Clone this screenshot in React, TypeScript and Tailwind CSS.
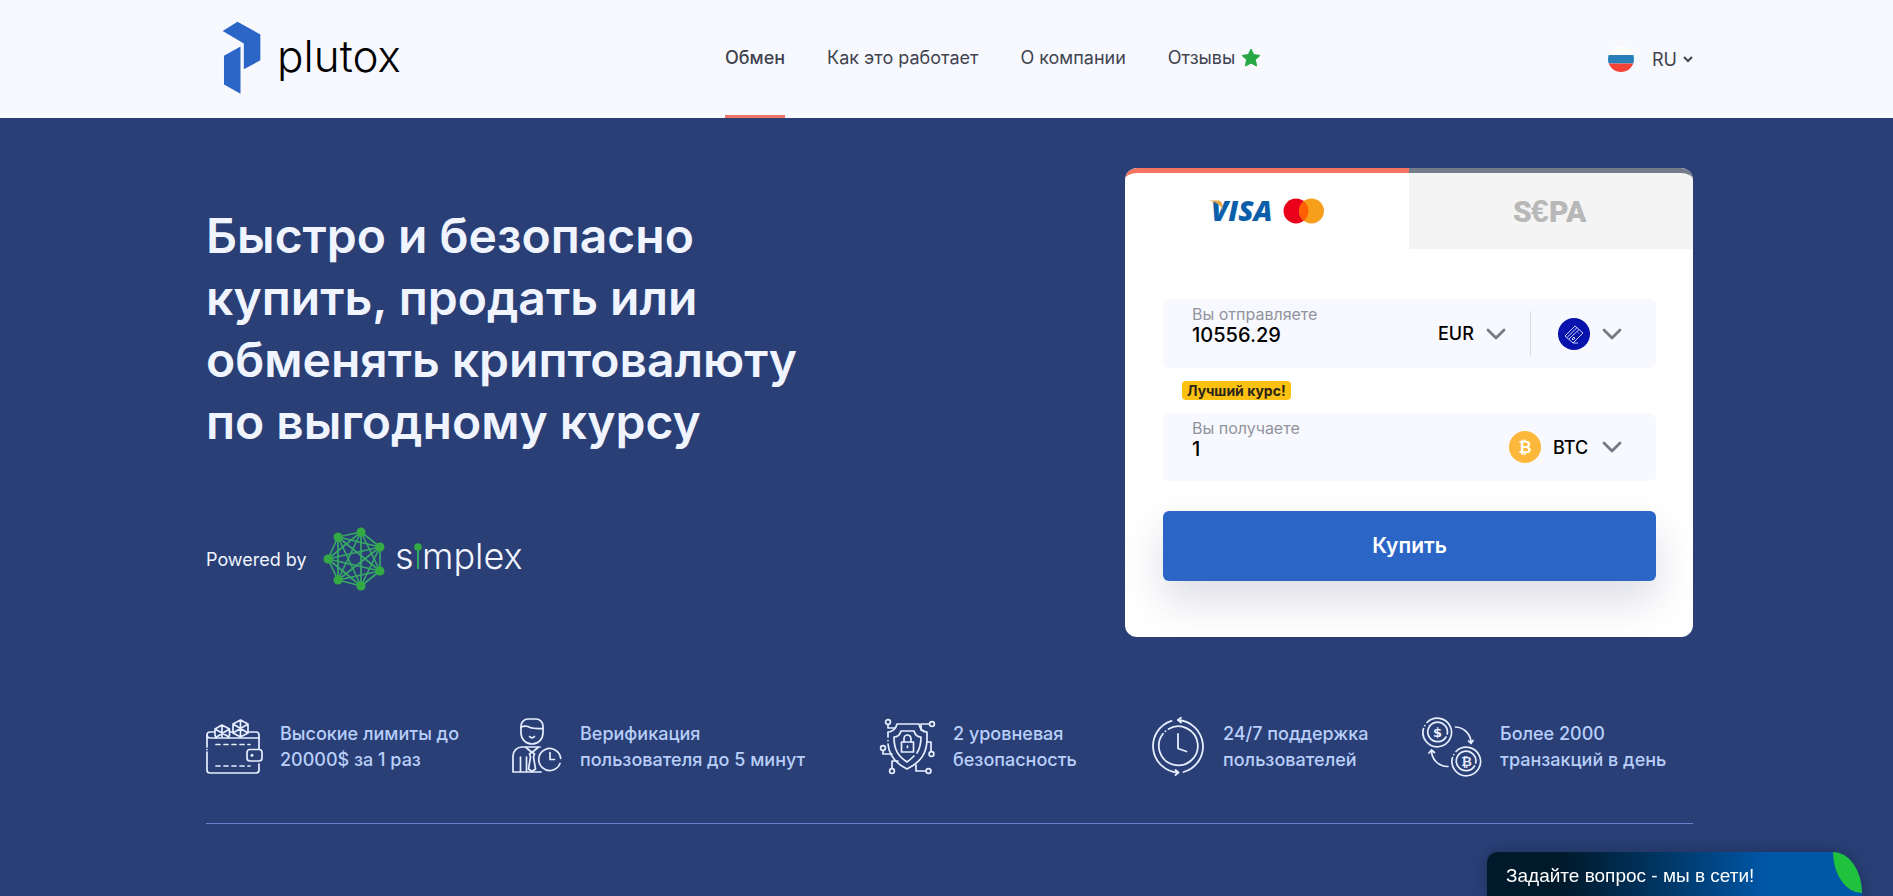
import { useState } from 'react'
import type { ReactNode } from 'react'

interface NavItem {
  label: string
  href: string
  star?: boolean
}

interface Feature {
  icon: ReactNode
  lines: [string, string]
}

const navItems: NavItem[] = [
  { label: 'Обмен', href: '#exchange' },
  { label: 'Как это работает', href: '#how' },
  { label: 'О компании', href: '#about' },
  { label: 'Отзывы', href: '#reviews', star: true },
]

function LogoMark() {
  return (
    <svg viewBox="0 0 118 222" className="h-[74px] w-[39px]" fill="#2b65c6" aria-hidden="true">
      <path d="M2 29 47 1 116 40V118L66 145V67Z" />
      <path d="M6 104 56 76V219L6 191Z" />
    </svg>
  )
}

function Star() {
  return (
    <svg viewBox="0 0 20 19" className="h-[19px] w-5" aria-hidden="true">
      <path
        d="M10 1l2.700 5.600 6.300.8-4.600 4.300 1.200 6.300L10 15.100l-5.600 2.900 1.200-6.300L1 7.400l6.300-.8z"
        fill="#28a745"
        stroke="#28a745"
        strokeWidth="1"
        strokeLinejoin="round"
      />
    </svg>
  )
}

function Flag() {
  return (
    <svg viewBox="0 0 26 26" className="size-[26px] rounded-full" aria-hidden="true">
      <path d="M0 0h26v9H0z" fill="#fff" />
      <path d="M0 9h26v8.500H0z" fill="#2980b9" />
      <path d="M0 17.500h26V26H0z" fill="#f44336" />
    </svg>
  )
}

function Chevron() {
  return (
    <svg viewBox="0 0 20 12" className="h-3 w-5" fill="none" stroke="#777a84" strokeWidth="2.800" strokeLinecap="round" strokeLinejoin="round" aria-hidden="true">
      <path d="M2 2l8 8 8-8" />
    </svg>
  )
}

function VisaLogo() {
  return (
    <svg viewBox="0 0 66 42" className="h-[42px] w-[66px]" role="img" aria-label="Visa">
      <text x="2" y="31" fontFamily="'Open Sans', sans-serif" fontSize="28" fontWeight="800" fontStyle="italic" fill="#0b5ea9">
        VISA
      </text>
      <path d="M0 10.500h9c2.500 0 3.500 1.500 4 3.500l1 6C11.500 15 7 12 0 10.500z" fill="#e9a646" />
    </svg>
  )
}

function MastercardLogo() {
  return (
    <svg viewBox="0 0 42 26" className="h-[26px] w-[42px]" role="img" aria-label="Mastercard">
      <circle cx="13" cy="13" r="12.500" fill="#eb001b" />
      <circle cx="28.500" cy="13" r="12.500" fill="#f79e1b" />
      <path d="M20.750 3.200a12.500 12.500 0 0 1 0 19.600 12.500 12.500 0 0 1 0-19.600z" fill="#ff5f00" />
    </svg>
  )
}

function SepaLogo() {
  return (
    <svg viewBox="0 0 76 42" className="h-[42px] w-[76px]" fill="#b8b8b8" role="img" aria-label="SEPA">
      <text x="0" y="32" fontFamily="Roboto, sans-serif" fontSize="30" fontWeight="900">
        S
      </text>
      <text x="18" y="32" fontFamily="'Liberation Sans', sans-serif" fontSize="32" fontWeight="700">
        €
      </text>
      <text x="36" y="32" fontFamily="Roboto, sans-serif" fontSize="30" fontWeight="900">
        PA
      </text>
    </svg>
  )
}

function CardIcon() {
  return (
    <svg viewBox="0 0 32 32" className="size-8" fill="none" stroke="#c9d0ff" strokeWidth="1" strokeLinejoin="round" aria-hidden="true">
      <circle cx="16" cy="16" r="16" fill="#0812ac" stroke="none" />
      <path d="M7 18 17 8l8 7-10 10z" />
      <path d="M9 19.500l10-10M11 21l10-9.500M14 21l2-2 1 1-2 2zM20 14.500l1 1M15 25h5" />
    </svg>
  )
}

function BitcoinIcon() {
  return (
    <svg viewBox="0 0 32 32" className="size-8" aria-hidden="true">
      <circle cx="16" cy="16" r="16" fill="#fdb73b" />
      <text x="16" y="22" textAnchor="middle" fontFamily="'DejaVu Sans', sans-serif" fontSize="16" fontWeight="700" fill="#fff">
        ₿
      </text>
    </svg>
  )
}

const simplexNodes = [
  [38, 5],
  [57, 20],
  [57, 44],
  [38, 59],
  [15, 53],
  [5, 32],
  [15, 10],
]

function SimplexMark() {
  return (
    <svg viewBox="0 0 62 64" className="h-16 w-[62px]" aria-hidden="true">
      <g stroke="#38a866" strokeWidth="1.700">
        {simplexNodes.map(([x1, y1], i) =>
          simplexNodes.slice(i + 1).map(([x2, y2]) => (
            <line key={`${x1}-${y1}-${x2}-${y2}`} x1={x1} y1={y1} x2={x2} y2={y2} />
          )),
        )}
      </g>
      {simplexNodes.map(([x, y]) => (
        <circle key={`${x}-${y}`} cx={x} cy={y} r="4.500" fill="#34aa44" />
      ))}
    </svg>
  )
}

function SimplexWord() {
  return (
    <svg viewBox="0 0 136 56" className="h-14 w-[136px]" role="img" aria-label="simplex">
      <g fontFamily="Inter, sans-serif" fontSize="36" fontWeight="300" fill="#f3f6ff">
        <text x="0" y="38">s</text>
        <text x="27" y="38">mplex</text>
      </g>
      <path d="M23 16v22" stroke="#34aa66" strokeWidth="2" />
      <circle cx="23" cy="16" r="3.800" fill="#34aa44" />
    </svg>
  )
}

function WalletIcon() {
  return (
    <svg viewBox="0 0 56 60" className="h-[60px] w-14 shrink-0 overflow-visible" fill="none" stroke="#e6eeff" strokeWidth="1.700" strokeLinecap="round" strokeLinejoin="round" aria-hidden="true">
      <path d="M1 30V18a3 3 0 0 1 3-3h4M1 35v18a3 3 0 0 0 3 3h46a3 3 0 0 0 3-3v-6M43 15h7a3 3 0 0 1 3 3v14M1 32.500v.100M24 15h2" />
      <path d="M1 18c0 2 1 3 3 3h49" />
      <path d="M10 27.500h34M10 49h34" strokeDasharray="4 4" />
      <rect x="41" y="32.500" width="15" height="11.500" rx="3" />
      <circle cx="46" cy="38.200" r=".7" />
      <path d="M10 21l-1-3v-6l7-4 7.500 4v6l-1 3M9 12l14 8M23.500 12l-13 8M16 8v12" />
      <path d="M34.500 3 42 7v9l-7.500 4-7.500-4V7zM27 7l15 9M42 7l-15 9M34.500 3v17" />
    </svg>
  )
}

function PersonIcon() {
  return (
    <svg viewBox="0 0 50 60" className="h-[60px] w-[50px] shrink-0 overflow-visible" fill="none" stroke="#e6eeff" strokeWidth="1.700" strokeLinecap="round" strokeLinejoin="round" aria-hidden="true">
      <path d="M9 9a7 7 0 0 1 7-7h8a7 7 0 0 1 7 7v7a11 11 0 0 1-22 0z" />
      <path d="M9 10c5-2 7-1 9 .500 4 1.500 9 1 13 1M17.500 19.500c1.500 1.500 3.500 1.500 5 0" />
      <path d="M29 55H1V39a9 9 0 0 1 9-9h18M8.500 40v15M14.500 40v15" />
      <path d="M14 30.500l6 5 6-5M17.500 37l2.500-2 2.500 2-1 3 2 12-3.500 2.500-3.500-2.500 2-12z" />
      <path d="M48 46.500a11 11 0 1 1 .700-5" />
      <path d="M38 35.500v7h4.500" />
    </svg>
  )
}

function ShieldIcon() {
  return (
    <svg viewBox="0 0 55 60" className="h-[60px] w-[55px] shrink-0 overflow-visible" fill="none" stroke="#e6eeff" strokeWidth="1.700" strokeLinecap="round" strokeLinejoin="round" aria-hidden="true">
      <path d="M8 20v-5c4 0 8-3 9-8h22c1 5 4 8 8 8v7c0 14-6 23-20 30C15 46 9 38 8 27M8 23.500v.100" />
      <path d="M37 36c2.500-4 4-8 4-16-4 0-6-2-7-6H21c-1 4-3 6-7 6 0 13 4 19 13 25 3-2 5-4 7-6" />
      <rect x="21.500" y="25" width="12" height="10" />
      <path d="M24 25v-3.500a3.500 3.500 0 0 1 7 0V25M27.500 29v1.500M8 7.500V11h7M49 7h-8v6M47 25h4v9M3 33.500V37h9M12 51v-7h6M46 54H36v-6" />
      <circle cx="8" cy="5" r="2.400" />
      <circle cx="52" cy="7" r="2.400" />
      <circle cx="3" cy="31" r="2.400" />
      <circle cx="51.500" cy="37" r="2.400" />
      <circle cx="12" cy="54" r="2.400" />
      <circle cx="48.500" cy="54" r="2.400" />
    </svg>
  )
}

function SupportIcon() {
  return (
    <svg viewBox="1 0 54 60" className="h-[60px] w-[54px] shrink-0 overflow-visible" fill="none" stroke="#e6eeff" strokeWidth="1.800" strokeLinecap="round" strokeLinejoin="round" aria-hidden="true">
      <path d="M21.500 3.800A26.500 26.500 0 0 0 28 55.500M33.500 55A26.500 26.500 0 0 0 28 3" />
      <path d="M31 .800l-3 2.200 3 2.500M25.500 53l3 2.500-3 2.500" />
      <path d="M18.500 12a19.500 19.500 0 1 1-5.500 4.800M15.500 14.200v.100" />
      <path d="M28 17v14.500l8.500 3" />
    </svg>
  )
}

function ExchangeIcon() {
  return (
    <svg viewBox="0 0 60 60" className="h-[60px] w-[60px] shrink-0" fill="none" stroke="#e6eeff" strokeWidth="1.700" strokeLinecap="round" strokeLinejoin="round" aria-hidden="true">
      <path d="M5 5.500a14.300 14.300 0 1 1-3.500 6M2.800 8.500v.100" />
      <path d="M24 20a9.800 9.800 0 1 1 1.200-3" />
      <path d="M34 34.500a14.300 14.300 0 1 1-3.500 6M31.800 37.500v.100" />
      <path d="M52.500 49a9.800 9.800 0 1 1 1.200-3" />
      <path d="M33.500 10A16 16 0 0 1 49 26M46.500 24l2.500 2.500 2-3M26 49.500A16 16 0 0 1 9.500 33.500M7 36l2.500-3 3 2.500" />
      <g fill="#e6eeff" stroke="none" fontFamily="'DejaVu Sans', sans-serif" fontSize="13" fontWeight="700" textAnchor="middle">
        <text x="15.500" y="20">$</text>
        <text x="44.500" y="49">₿</text>
      </g>
    </svg>
  )
}

const features: Feature[] = [
  { icon: <WalletIcon />, lines: ['Высокие лимиты до', '20000$ за 1 раз'] },
  { icon: <PersonIcon />, lines: ['Верификация', 'пользователя до 5 минут'] },
  { icon: <ShieldIcon />, lines: ['2 уровневая', 'безопасность'] },
  { icon: <SupportIcon />, lines: ['24/7 поддержка', 'пользователей'] },
  { icon: <ExchangeIcon />, lines: ['Более 2000', 'транзакций в день'] },
]

function Header() {
  return (
    <header className="bg-[#f8f9fe] pl-1.5">
      <div className="mx-auto flex h-[118px] max-w-[1487px] items-stretch justify-between">
        <a href="/" className="flex w-[519px] items-center gap-4 pb-0.5 pl-4">
          <LogoMark />
          <span className="pb-1 text-[44px] font-light leading-none text-black">plutox</span>
        </a>
        <nav className="flex gap-[42px] text-[18px] text-[#41434f]">
          {navItems.map((item, i) => (
            <a
              key={item.label}
              href={item.href}
              className={
                i === 0
                  ? 'flex items-center border-b-[3px] border-[#ec7468] font-medium'
                  : 'flex items-center gap-1.5 border-b-[3px] border-transparent'
              }
            >
              {item.label}
              {item.star && <Star />}
            </a>
          ))}
        </nav>
        <label className="ml-auto flex items-center text-[18px] text-[#41434f]">
          <Flag />
          <select aria-label="Язык" defaultValue="RU" className="ml-[18px] appearance-none bg-transparent">
            <option>RU</option>
            <option>EN</option>
          </select>
          <svg viewBox="0 0 10 8" className="ml-1.5 h-2 w-2.5" fill="none" stroke="#41434f" strokeWidth="2" aria-hidden="true">
            <path d="M1 2l4 4 4-4" />
          </svg>
        </label>
      </div>
    </header>
  )
}

function ExchangeCard() {
  const [tab, setTab] = useState('card')
  const [send, setSend] = useState('10556.29')
  const [receive, setReceive] = useState('1')

  return (
    <section id="exchange" className="w-[568px] shrink-0 overflow-hidden rounded-xl bg-white pb-14">
      <div role="tablist" className="grid h-[81px] grid-cols-2">
        <button
          role="tab"
          aria-selected={tab === 'card'}
          onClick={() => setTab('card')}
          className="flex items-center justify-center gap-2 rounded-tl-xl border-t-[5px] border-[#f8735f] bg-white"
        >
          <VisaLogo />
          <MastercardLogo />
        </button>
        <button
          role="tab"
          aria-selected={tab === 'sepa'}
          onClick={() => setTab('sepa')}
          className="flex items-center justify-center rounded-tr-xl border-t-[5px] border-[#747b8a] bg-[#f4f4f4]"
        >
          <SepaLogo />
        </button>
      </div>

      <form className="pl-[38px] pr-[37px] pt-[50px]" onSubmit={(e) => e.preventDefault()}>
        <div className="flex h-[69px] rounded-md bg-[#f8f9fe] pl-[29px] pr-[34px]">
          <div className="flex min-w-0 flex-1 flex-col pt-1.5">
            <label htmlFor="send" className="text-[16px] leading-[18px] text-[#91939d]">
              Вы отправляете
            </label>
            <input
              id="send"
              value={send}
              onChange={(e) => setSend(e.target.value)}
              className="h-6 w-full bg-transparent text-[20px] font-medium leading-6 text-black outline-none"
            />
          </div>
          <label className="flex items-center gap-2.5 text-[18px] font-medium text-black">
            <select aria-label="Валюта" defaultValue="EUR" className="appearance-none bg-transparent">
              <option>EUR</option>
              <option>USD</option>
            </select>
            <Chevron />
          </label>
          <span className="my-3 ml-6 mr-[27px] w-px bg-[#d9dbe6]" />
          <button type="button" aria-label="Способ оплаты" className="flex items-center gap-3">
            <CardIcon />
            <Chevron />
          </button>
        </div>

        <div className="flex h-[45px] items-center pl-[19px]">
          <span className="rounded bg-[#fdc112] px-[5px] text-[14px] font-bold leading-[19px] text-[#2b2618]">
            Лучший курс!
          </span>
        </div>

        <div className="flex h-[68px] rounded-md bg-[#f8f9fe] pl-[29px] pr-[34px]">
          <div className="flex min-w-0 flex-1 flex-col pt-1.5">
            <label htmlFor="receive" className="text-[16px] leading-[18px] text-[#91939d]">
              Вы получаете
            </label>
            <input
              id="receive"
              value={receive}
              onChange={(e) => setReceive(e.target.value)}
              className="h-6 w-full bg-transparent text-[20px] font-medium leading-6 text-black outline-none"
            />
          </div>
          <label className="flex items-center gap-3 text-[18px] font-medium text-black">
            <BitcoinIcon />
            <select aria-label="Криптовалюта" defaultValue="BTC" className="appearance-none bg-transparent">
              <option>BTC</option>
              <option>ETH</option>
            </select>
            <Chevron />
          </label>
        </div>

        <button
          type="submit"
          className="mt-[30px] h-[70px] w-full rounded-md bg-[#2b65c6] text-[21px] font-semibold text-white shadow-[0_20px_40px_rgba(30,35,80,0.15)]"
        >
          Купить
        </button>
      </form>
    </section>
  )
}

export default function App() {
  return (
    <div className="flex min-h-screen flex-col bg-[#293f76] font-[Inter,'Noto_Sans',sans-serif]">
      <Header />

      <main className="flex-1 pl-1.5">
        <div className="mx-auto max-w-[1487px] pt-[50px]">
          <div className="flex items-start justify-between">
            <div className="pt-[37px]">
              <h1 className="text-[48px] font-semibold leading-[62px] text-[#eff4ff]">
                Быстро и безопасно
                <br />
                купить, продать или
                <br />
                обменять криптовалюту
                <br />
                по выгодному курсу
              </h1>
              <div className="mt-[74px] flex items-center text-[18px] text-[#eff4ff]">
                Powered by
                <span className="ml-4 flex items-center gap-2.5">
                  <SimplexMark />
                  <SimplexWord />
                </span>
              </div>
            </div>
            <ExchangeCard />
          </div>

          <ul className="grid grid-cols-[306fr_368fr_271fr_271fr_271fr] border-b border-[#6a80cc] pb-[46px] pt-20">
            {features.map((feature) => (
              <li key={feature.lines[0]} className="flex items-center gap-[18px] text-[18px] font-medium leading-[26px] text-[#b9cffa]">
                {feature.icon}
                <span className="whitespace-nowrap">
                  {feature.lines[0]}
                  <br />
                  {feature.lines[1]}
                </span>
              </li>
            ))}
          </ul>
        </div>
      </main>

      <button className="fixed bottom-0 right-[31px] flex h-11 w-[375px] items-center rounded-tl-[10px] rounded-tr-[29px_41px] bg-linear-to-r from-[#001a2c] from-20% to-[#0057a8] to-75% pl-[19px] pt-1 font-['Liberation_Sans',Arial,sans-serif] text-[19px] text-white shadow-[0_0_14px_rgba(0,0,0,0.25)]">
        Задайте вопрос - мы в сети!
        <svg viewBox="0 0 29 41" className="absolute right-0 top-0 h-[41px] w-[29px]" aria-hidden="true">
          <path d="M0 0A29 41 0 0 1 29 41 29 41 0 0 1 0 0z" fill="#1fc13d" />
        </svg>
      </button>
    </div>
  )
}
